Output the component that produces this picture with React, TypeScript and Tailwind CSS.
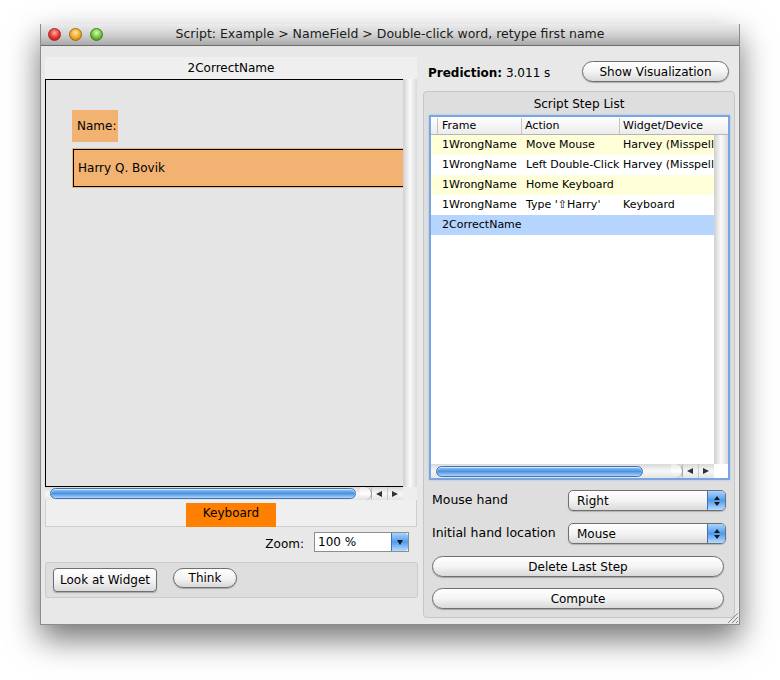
import React from "react";

const font = "font-['DejaVu_Sans',sans-serif]";

function HScroll({ width, thumb }: { width: number; thumb: number }) {
  return (
    <div className="flex h-full items-center bg-gradient-to-b from-[#d9d9d9] via-[#f7f7f7] to-[#e4e4e4]" style={{ width }}>
      <div className="relative flex h-full flex-1 items-center pl-[5px]">
        <div
          className="h-[11px] rounded-full border border-[#3d74c0] bg-gradient-to-b from-[#8ec1f0] via-[#4b93e2] to-[#aed6f7] shadow-[inset_0_1px_1px_rgba(255,255,255,0.7)]"
          style={{ width: thumb }}
        />
        <div className="ml-auto mr-[-1px] h-full w-[12px] rounded-r-full border-r border-[#9a9a9a] bg-gradient-to-b from-[#e8e8e8] via-white to-[#e0e0e0]" />
      </div>
      <div className="flex h-full w-[32px] border-l border-[#bdbdbd]">
        <div className="flex w-1/2 items-center justify-center border-r border-[#c8c8c8]">
          <div className="h-0 w-0 border-y-[3.5px] border-r-[6px] border-y-transparent border-r-[#333]" />
        </div>
        <div className="flex w-1/2 items-center justify-center">
          <div className="h-0 w-0 border-y-[3.5px] border-l-[6px] border-y-transparent border-l-[#333]" />
        </div>
      </div>
    </div>
  );
}

function VScroll() {
  return <div className="h-full w-full bg-gradient-to-r from-[#cfcfcf] via-[#fbfbfb] to-[#d9d9d9]" />;
}

function AquaButton({ children, className }: { children: React.ReactNode; className: string }) {
  return (
    <div
      className={
        "flex items-center justify-center border border-[#6e6e6e] bg-gradient-to-b from-white via-[#f4f4f4] to-[#d9d9d9] text-[12px] text-black shadow-[0_1px_1px_rgba(0,0,0,0.25)] " +
        className
      }
    >
      {children}
    </div>
  );
}

function Popup({ value }: { value: string }) {
  return (
    <div className="flex h-[21px] w-[158px] overflow-hidden rounded-[5px] border border-[#6f6f6f] bg-gradient-to-b from-white via-[#f3f3f3] to-[#dadada] shadow-[0_1px_1px_rgba(0,0,0,0.2)]">
      <div className="flex flex-1 items-center pl-[8px] text-[12px] text-black">{value}</div>
      <div className="flex w-[18px] flex-col items-center justify-center gap-[2px] border-l border-[#4a6fae] bg-gradient-to-b from-[#a9d3fb] via-[#4e9bef] to-[#b4dcff]">
        <div className="h-0 w-0 border-x-[3px] border-b-[4px] border-x-transparent border-b-[#1a1a1a]" />
        <div className="h-0 w-0 border-x-[3px] border-t-[4px] border-x-transparent border-t-[#1a1a1a]" />
      </div>
    </div>
  );
}

const rows = [
  { frame: "1WrongName", action: "Move Mouse", widget: "Harvey (Misspelled)", bg: "bg-[#fefed8]" },
  { frame: "1WrongName", action: "Left Double-Click", widget: "Harvey (Misspelled)", bg: "bg-white" },
  { frame: "1WrongName", action: "Home Keyboard", widget: "", bg: "bg-[#fefed8]" },
  { frame: "1WrongName", action: "Type '\u21e7Harry'", widget: "Keyboard", bg: "bg-white" },
  { frame: "2CorrectName", action: "", widget: "", bg: "bg-[#b5d5fe]" },
];

export default function App() {
  return (
    <div className={"h-[680px] w-[780px] bg-white pl-[40px] pt-[24px] " + font}>
      <div className="relative flex h-[601px] w-[700px] flex-col border-x border-b border-[#8c8c8c] shadow-[0_14px_30px_rgba(0,0,0,0.55)]">
        {/* TITLE BAR */}
        <div className="flex h-[22px] items-center border-b border-[#6d6d6d] bg-gradient-to-b from-[#ececec] via-[#d2d2d2] to-[#a9a9a9]">
          <div className="flex w-[80px] gap-[8px] pl-[7px]">
            <div className="h-[13px] w-[13px] rounded-full border border-[#9a2a2a] bg-[radial-gradient(circle_at_50%_35%,#ffb0a8,#e8302c_55%,#a31515)]" />
            <div className="h-[13px] w-[13px] rounded-full border border-[#9b6a16] bg-[radial-gradient(circle_at_50%_35%,#ffe9a0,#f3a526_55%,#b06a0c)]" />
            <div className="h-[13px] w-[13px] rounded-full border border-[#3d7f22] bg-[radial-gradient(circle_at_50%_35%,#d6ffb0,#6cc13a_55%,#2f7d16)]" />
          </div>
          <div className="flex-1 text-center text-[12.5px] text-[#1a1a1a]">
            Script: Example &gt; NameField &gt; Double-click word, retype first name
          </div>
          <div className="w-[80px]" />
        </div>

        {/* CONTENT */}
        <div className="flex flex-1 gap-[6px] bg-[#e8e8e8] pl-[4px]">
          {/* LEFT COLUMN */}
          <div className="flex w-[372px] flex-col pt-[11px]">
            <div className="flex h-[22px] items-center justify-center bg-[#efefef] text-[12px] text-black">2CorrectName</div>
            <div className="flex">
              <div className="h-[408px] w-[358px] overflow-hidden border-y border-l border-black bg-[#e5e5e5] pl-[26px] pt-[30px]">
                <div className="flex h-[32px] w-[46px] items-center bg-[#f2b272] pl-[5px] text-[12px] text-black">Name:</div>
                <div className="mt-[6px] h-[40px] w-[340px] border border-[#f2b272]">
                  <div className="flex h-full items-center border border-black bg-[#f2b272] pl-[4px] text-[12px] text-black">
                    Harry Q. Bovik
                  </div>
                </div>
              </div>
              <div className="h-[408px] w-[14px]">
                <VScroll />
              </div>
            </div>
            <div className="flex h-[13px]">
              <HScroll width={358} thumb={306} />
              <div className="w-[14px] bg-[#eeeeee]" />
            </div>
            <div className="h-[27px] border-x border-b border-[#cfcfcf] bg-[#efefef] pl-[140px] pt-[3px]">
              <div className="flex h-[24px] w-[90px] justify-center bg-[#ff8000] pt-[1px] text-[12px] text-black">Keyboard</div>
            </div>
            <div className="mt-[5px] flex h-[20px] items-center justify-end pr-[8px]">
              <span className="mr-[10px] pt-[3px] text-[12px] text-black">Zoom:</span>
              <div className="flex h-[20px] w-[95px] border border-[#8e8e8e] bg-white">
                <div className="flex flex-1 items-center pl-[3px] text-[12px] text-black">100 %</div>
                <div className="flex w-[17px] items-center justify-center rounded-r-[3px] border-l border-[#4a6fae] bg-gradient-to-b from-[#a9d3fb] via-[#4e9bef] to-[#b4dcff]">
                  <div className="h-0 w-0 border-x-[3.5px] border-t-[5px] border-x-transparent border-t-[#1a1a1a]" />
                </div>
              </div>
            </div>
            <div className="mt-[10px] flex h-[36px] w-[373px] items-start gap-[16px] rounded-[3px] border border-[#cbcbcb] bg-[#dedede] pl-[7px] pt-[5px]">
              <AquaButton className="h-[24px] w-[104px] rounded-[4px]">Look at Widget</AquaButton>
              <AquaButton className="h-[20px] w-[64px] rounded-full">Think</AquaButton>
            </div>
          </div>

          {/* RIGHT COLUMN */}
          <div className="flex w-[312px] flex-col pt-[15px]">
            <div className="flex h-[21px] items-center justify-between pl-[5px] pr-[6px]">
              <div className="pt-[3px] text-[12px] text-black">
                <span className="font-bold">Prediction:</span> 3.011 s
              </div>
              <AquaButton className="h-[21px] w-[147px] rounded-full">Show Visualization</AquaButton>
            </div>
            <div className="mt-[9px] flex h-[527px] flex-col rounded-[4px] border border-[#c6c6c6] bg-[#dedede] px-[5px]">
              <div className="pt-[3px] text-center text-[12px] text-black">Script Step List</div>
              <div className="mt-[2px] h-[365px] w-[301px] border-2 border-[#7aa5e0] shadow-[0_0_2px_#9fc2ee]">
                <div className="flex h-full flex-col bg-white">
                  {/* HEADER */}
                  <div className="flex h-[18px] items-center border-b border-[#b5b5b5] bg-gradient-to-b from-white to-[#ececec] pt-[1px] text-[11px] text-black">
                    <div className="h-full w-[7px] border-r border-[#c4c4c4]" />
                    <div className="flex h-full w-[84px] items-center border-r border-[#c4c4c4] pl-[4px]">Frame</div>
                    <div className="flex h-full w-[98px] items-center border-r border-[#c4c4c4] pl-[3px]">Action</div>
                    <div className="flex h-full flex-1 items-center pl-[3px]">Widget/Device</div>
                  </div>
                  {/* BODY */}
                  <div className="flex flex-1">
                    <div className="w-[283px] overflow-hidden">
                      {rows.map((r, i) => (
                        <div key={i} className={"flex h-[20px] items-center whitespace-nowrap text-[11px] text-black " + r.bg}>
                          <div className="w-[91px] pl-[11px]">{r.frame}</div>
                          <div className="w-[98px] pl-[4px]">{r.action}</div>
                          <div className="flex-1 overflow-hidden pl-[3px]">{r.widget}</div>
                        </div>
                      ))}
                    </div>
                    <div className="w-[14px]">
                      <VScroll />
                    </div>
                  </div>
                  <div className="flex h-[14px]">
                    <HScroll width={283} thumb={207} />
                    <div className="w-[14px] bg-white" />
                  </div>
                </div>
              </div>
              <div className="mt-[10px] flex items-center justify-between pl-[3px] pr-[3px]">
                <span className="text-[12.5px] text-black">Mouse hand</span>
                <Popup value="Right" />
              </div>
              <div className="mt-[12px] flex items-center justify-between pl-[3px] pr-[3px]">
                <span className="text-[12.5px] text-black">Initial hand location</span>
                <Popup value="Mouse" />
              </div>
              <AquaButton className="ml-[3px] mt-[12px] h-[21px] w-[292px] rounded-full">Delete Last Step</AquaButton>
              <AquaButton className="ml-[3px] mt-[11px] h-[21px] w-[292px] rounded-full">Compute</AquaButton>
            </div>
          </div>
        </div>

        {/* RESIZE GRIP */}
        <svg className="absolute bottom-0 right-0" width="14" height="14" viewBox="0 0 14 14">
          <line x1="3" y1="13" x2="13" y2="3" stroke="#8a8a8a" strokeWidth="1" />
          <line x1="7" y1="13" x2="13" y2="7" stroke="#8a8a8a" strokeWidth="1" />
          <line x1="11" y1="13" x2="13" y2="11" stroke="#8a8a8a" strokeWidth="1" />
        </svg>
      </div>
    </div>
  );
}
